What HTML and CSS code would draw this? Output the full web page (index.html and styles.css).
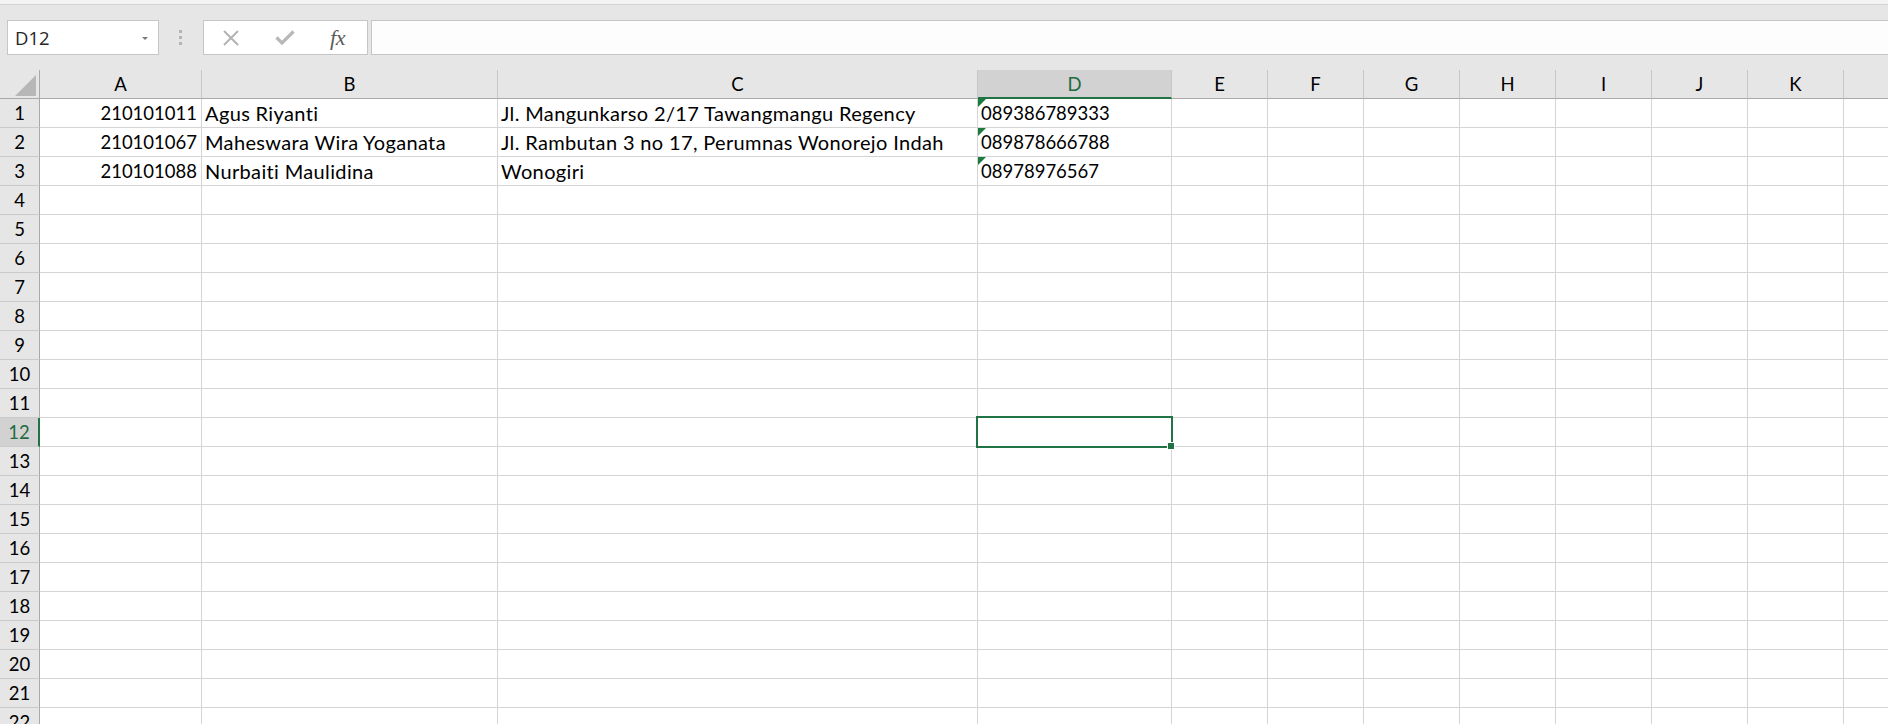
FILE: index.html
```html
<!DOCTYPE html>
<html lang="id">
<head>
<meta charset="utf-8">
<title>Sheet</title>
<link rel="stylesheet" href="styles.css">
</head>
<body>
<div class="ribbon-edge"></div>
<div class="fbar">
  <div class="namebox"><span class="nb-text">D12</span><span class="nb-arrow"></span></div>
  <div class="grip"><i></i><i></i><i></i></div>
  <div class="fbtns">
    <svg class="ic" width="18" height="16" viewBox="0 0 18 16"><path d="M2 1 L16 15 M16 1 L2 15" stroke="#b3b3b3" stroke-width="2" fill="none"/></svg>
    <svg class="ic" width="20" height="15" viewBox="0 0 20 15"><path d="M1.5 7.5 L7 13 L18.5 1.5" stroke="#b8b8b8" stroke-width="3.2" fill="none"/></svg>
    <span class="fx">fx</span>
  </div>
  <div class="finput"></div>
</div>
<div class="sheet">
  <div class="row hdr">
    <div class="corner"><svg width="21" height="21" viewBox="0 0 21 21"><polygon points="21,0 21,21 0,21" fill="#b7b7b7"/></svg></div>
    <div class="ch">A</div><div class="ch">B</div><div class="ch">C</div><div class="ch sel">D</div><div class="ch">E</div><div class="ch">F</div><div class="ch">G</div><div class="ch">H</div><div class="ch">I</div><div class="ch">J</div><div class="ch">K</div><div class="ch"></div>
  </div>
  <div class="row"><div class="rh">1</div><div class="c num">210101011</div><div class="c txt">Agus Riyanti</div><div class="c txt">Jl. Mangunkarso 2/17 Tawangmangu Regency</div><div class="c err">089386789333</div><div class="c"></div><div class="c"></div><div class="c"></div><div class="c"></div><div class="c"></div><div class="c"></div><div class="c"></div><div class="c"></div></div>
  <div class="row"><div class="rh">2</div><div class="c num">210101067</div><div class="c txt">Maheswara Wira Yoganata</div><div class="c txt">Jl. Rambutan 3 no 17, Perumnas Wonorejo Indah</div><div class="c err">089878666788</div><div class="c"></div><div class="c"></div><div class="c"></div><div class="c"></div><div class="c"></div><div class="c"></div><div class="c"></div><div class="c"></div></div>
  <div class="row"><div class="rh">3</div><div class="c num">210101088</div><div class="c txt">Nurbaiti Maulidina</div><div class="c txt">Wonogiri</div><div class="c err">08978976567</div><div class="c"></div><div class="c"></div><div class="c"></div><div class="c"></div><div class="c"></div><div class="c"></div><div class="c"></div><div class="c"></div></div>
  <div class="row"><div class="rh">4</div><div class="c"></div><div class="c"></div><div class="c"></div><div class="c"></div><div class="c"></div><div class="c"></div><div class="c"></div><div class="c"></div><div class="c"></div><div class="c"></div><div class="c"></div><div class="c"></div></div>
  <div class="row"><div class="rh">5</div><div class="c"></div><div class="c"></div><div class="c"></div><div class="c"></div><div class="c"></div><div class="c"></div><div class="c"></div><div class="c"></div><div class="c"></div><div class="c"></div><div class="c"></div><div class="c"></div></div>
  <div class="row"><div class="rh">6</div><div class="c"></div><div class="c"></div><div class="c"></div><div class="c"></div><div class="c"></div><div class="c"></div><div class="c"></div><div class="c"></div><div class="c"></div><div class="c"></div><div class="c"></div><div class="c"></div></div>
  <div class="row"><div class="rh">7</div><div class="c"></div><div class="c"></div><div class="c"></div><div class="c"></div><div class="c"></div><div class="c"></div><div class="c"></div><div class="c"></div><div class="c"></div><div class="c"></div><div class="c"></div><div class="c"></div></div>
  <div class="row"><div class="rh">8</div><div class="c"></div><div class="c"></div><div class="c"></div><div class="c"></div><div class="c"></div><div class="c"></div><div class="c"></div><div class="c"></div><div class="c"></div><div class="c"></div><div class="c"></div><div class="c"></div></div>
  <div class="row"><div class="rh">9</div><div class="c"></div><div class="c"></div><div class="c"></div><div class="c"></div><div class="c"></div><div class="c"></div><div class="c"></div><div class="c"></div><div class="c"></div><div class="c"></div><div class="c"></div><div class="c"></div></div>
  <div class="row"><div class="rh">10</div><div class="c"></div><div class="c"></div><div class="c"></div><div class="c"></div><div class="c"></div><div class="c"></div><div class="c"></div><div class="c"></div><div class="c"></div><div class="c"></div><div class="c"></div><div class="c"></div></div>
  <div class="row"><div class="rh">11</div><div class="c"></div><div class="c"></div><div class="c"></div><div class="c"></div><div class="c"></div><div class="c"></div><div class="c"></div><div class="c"></div><div class="c"></div><div class="c"></div><div class="c"></div><div class="c"></div></div>
  <div class="row"><div class="rh sel">12</div><div class="c"></div><div class="c"></div><div class="c"></div><div class="c active"><div class="selbox"><span class="handle"></span></div></div><div class="c"></div><div class="c"></div><div class="c"></div><div class="c"></div><div class="c"></div><div class="c"></div><div class="c"></div><div class="c"></div></div>
  <div class="row"><div class="rh">13</div><div class="c"></div><div class="c"></div><div class="c"></div><div class="c"></div><div class="c"></div><div class="c"></div><div class="c"></div><div class="c"></div><div class="c"></div><div class="c"></div><div class="c"></div><div class="c"></div></div>
  <div class="row"><div class="rh">14</div><div class="c"></div><div class="c"></div><div class="c"></div><div class="c"></div><div class="c"></div><div class="c"></div><div class="c"></div><div class="c"></div><div class="c"></div><div class="c"></div><div class="c"></div><div class="c"></div></div>
  <div class="row"><div class="rh">15</div><div class="c"></div><div class="c"></div><div class="c"></div><div class="c"></div><div class="c"></div><div class="c"></div><div class="c"></div><div class="c"></div><div class="c"></div><div class="c"></div><div class="c"></div><div class="c"></div></div>
  <div class="row"><div class="rh">16</div><div class="c"></div><div class="c"></div><div class="c"></div><div class="c"></div><div class="c"></div><div class="c"></div><div class="c"></div><div class="c"></div><div class="c"></div><div class="c"></div><div class="c"></div><div class="c"></div></div>
  <div class="row"><div class="rh">17</div><div class="c"></div><div class="c"></div><div class="c"></div><div class="c"></div><div class="c"></div><div class="c"></div><div class="c"></div><div class="c"></div><div class="c"></div><div class="c"></div><div class="c"></div><div class="c"></div></div>
  <div class="row"><div class="rh">18</div><div class="c"></div><div class="c"></div><div class="c"></div><div class="c"></div><div class="c"></div><div class="c"></div><div class="c"></div><div class="c"></div><div class="c"></div><div class="c"></div><div class="c"></div><div class="c"></div></div>
  <div class="row"><div class="rh">19</div><div class="c"></div><div class="c"></div><div class="c"></div><div class="c"></div><div class="c"></div><div class="c"></div><div class="c"></div><div class="c"></div><div class="c"></div><div class="c"></div><div class="c"></div><div class="c"></div></div>
  <div class="row"><div class="rh">20</div><div class="c"></div><div class="c"></div><div class="c"></div><div class="c"></div><div class="c"></div><div class="c"></div><div class="c"></div><div class="c"></div><div class="c"></div><div class="c"></div><div class="c"></div><div class="c"></div></div>
  <div class="row"><div class="rh">21</div><div class="c"></div><div class="c"></div><div class="c"></div><div class="c"></div><div class="c"></div><div class="c"></div><div class="c"></div><div class="c"></div><div class="c"></div><div class="c"></div><div class="c"></div><div class="c"></div></div>
  <div class="row"><div class="rh">22</div><div class="c"></div><div class="c"></div><div class="c"></div><div class="c"></div><div class="c"></div><div class="c"></div><div class="c"></div><div class="c"></div><div class="c"></div><div class="c"></div><div class="c"></div><div class="c"></div></div>
</div>
</body>
</html>
```
FILE: styles.css
```css
* { box-sizing: border-box; }
html, body { margin: 0; padding: 0; }
body {
  width: 1888px;
  height: 724px;
  overflow: hidden;
  background: #ffffff;
  font-family: "Lato", "Open Sans", sans-serif;
}

.ribbon-edge {
  height: 5px;
  background: #f4f4f4;
  border-bottom: 1px solid #d3d3d3;
}

.fbar {
  display: flex;
  align-items: center;
  height: 65px;
  padding: 15px 0 15px 7px;
  background: #e6e6e6;
}

.namebox {
  width: 152px;
  height: 35px;
  flex: none;
  display: flex;
  align-items: center;
  justify-content: space-between;
  padding: 0 10px 0 7px;
  background: #ffffff;
  border: 1px solid #c6c6c6;
}
.nb-text {
  font-family: "Open Sans", "Noto Sans", sans-serif;
  font-size: 18.5px;
  color: #262626;
  line-height: 1;
  padding-top: 2px;
}
.nb-arrow {
  width: 0;
  height: 0;
  border-left: 3px solid transparent;
  border-right: 3px solid transparent;
  border-top: 3px solid #7a7a7a;
  margin-top: 1px;
}

.grip {
  flex: none;
  margin-left: 20px;
  display: flex;
  flex-direction: column;
  gap: 3px;
}
.grip i {
  display: block;
  width: 3px;
  height: 3px;
  background: #b4b4b4;
}

.fbtns {
  flex: none;
  margin-left: 21px;
  width: 165px;
  height: 35px;
  display: grid;
  grid-template-columns: 54px 54px 55px;
  align-items: center;
  justify-items: center;
  background: #ffffff;
  border: 1px solid #c6c6c6;
}
.ic { display: block; }
.fx {
  font-family: "Liberation Serif", "DejaVu Serif", serif;
  font-style: italic;
  font-size: 22px;
  color: #5a5a5a;
  line-height: 1;
  letter-spacing: -0.5px;
  margin-left: -4px;
}

.finput {
  flex: 1;
  margin-left: 3px;
  height: 35px;
  background: #fdfdfd;
  border: 1px solid #c6c6c6;
  border-right: none;
}

.sheet { width: 1940px; }

.row {
  display: grid;
  grid-template-columns: 40px 162px 296px 480px 194px repeat(8, 96px);
  height: 29px;
}
.row > div {
  height: 29px;
  border-right: 1px solid #d4d4d4;
  border-bottom: 1px solid #d4d4d4;
  font-size: 18.5px;
  line-height: 28px;
  color: #000000;
  white-space: nowrap;
  overflow: hidden;
  padding: 0 3px;
}
.row > .txt {
  font-size: 20px;
  letter-spacing: 0.35px;
}

.hdr > div {
  background: #e6e6e6;
  border-right-color: #c6c6c6;
  border-bottom-color: #a9a9a9;
  text-align: center;
  padding: 0;
}
.hdr > .corner {
  display: flex;
  align-items: flex-end;
  justify-content: flex-end;
  padding: 0 3px 2px 0;
  border-right-color: #a9a9a9;
}
.hdr > .ch.sel {
  background: #d2d2d2;
  color: #1f6b42;
  border-bottom: 2px solid #217346;
}

.row > .rh {
  background: #e6e6e6;
  border-right-color: #a9a9a9;
  border-bottom-color: #cacaca;
  text-align: center;
  padding: 0;
}
.row > .rh.sel {
  background: #d2d2d2;
  color: #1f6b42;
  border-right: 2px solid #217346;
}

.row > .num {
  text-align: right;
  padding-right: 4px;
}

.row > .err { position: relative; }
.row > .err::before {
  content: "";
  position: absolute;
  left: 0;
  top: 0;
  border-top: 8px solid #1b7a3e;
  border-right: 8px solid transparent;
}

.row > .active {
  position: relative;
  overflow: visible;
}
.selbox {
  position: absolute;
  left: -2px;
  top: -2px;
  right: -2px;
  bottom: -2px;
  border: 2px solid #217346;
  z-index: 2;
}
.handle {
  position: absolute;
  right: -3px;
  bottom: -3px;
  width: 6px;
  height: 6px;
  background: #217346;
  box-shadow: 0 0 0 1px #ffffff;
}
```
